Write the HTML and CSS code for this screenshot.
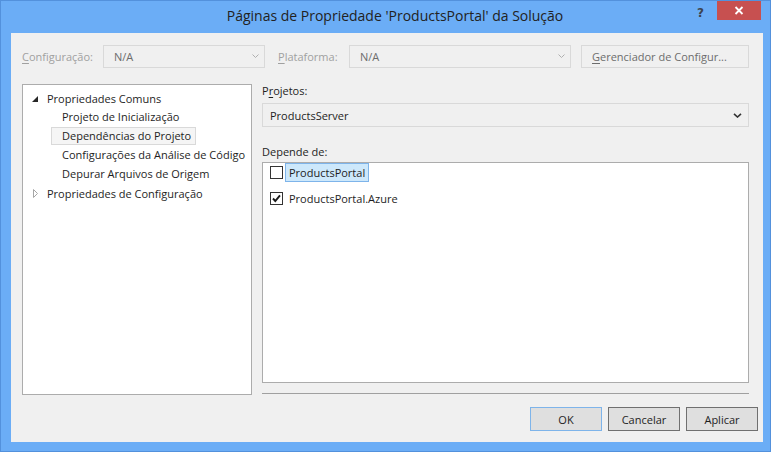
FILE: index.html
```html
<!DOCTYPE html>
<html lang="pt">
<head>
<meta charset="utf-8">
<title>Páginas de Propriedade</title>
<link rel="stylesheet" href="styles.css">
</head>
<body>
<div class="window">
  <div class="titlebar">
    <div class="title">Páginas de Propriedade 'ProductsPortal' da Solução</div>
    <div class="caption-buttons">
      <div class="help">?</div>
      <div class="close">
        <svg width="10" height="9" viewBox="0 0 10 9"><path d="M1.5 1 L8.5 8 M8.5 1 L1.5 8" stroke="#fff" stroke-width="1.8" fill="none"/></svg>
      </div>
    </div>
  </div>
  <div class="client">
    <div class="toolbar">
      <span class="lbl lbl-config"><u>C</u>onfiguração:</span>
      <div class="combo combo-dis combo-w1"><span>N/A</span><svg class="chev" width="7" height="4" viewBox="0 0 7 4"><path d="M0.5 0.5 L3.5 3.5 L6.5 0.5" stroke="#b0b0b0" stroke-width="1" fill="none"/></svg></div>
      <span class="lbl lbl-plat"><u>P</u>lataforma:</span>
      <div class="combo combo-dis combo-w2"><span>N/A</span><svg class="chev" width="7" height="4" viewBox="0 0 7 4"><path d="M0.5 0.5 L3.5 3.5 L6.5 0.5" stroke="#b0b0b0" stroke-width="1" fill="none"/></svg></div>
      <div class="btn-cfg"><u>G</u>erenciador de Configur...</div>
    </div>
    <div class="main">
      <div class="tree">
        <div class="row parent">
          <svg class="exp" width="6" height="6" viewBox="0 0 6 6"><polygon points="6,0 6,6 0,6" fill="#262626"/></svg>
          <span>Propriedades Comuns</span>
        </div>
        <div class="row child"><span class="node">Projeto de Inicialização</span></div>
        <div class="row child"><span class="node selected">Dependências do Projeto</span></div>
        <div class="row child"><span class="node">Configurações da Análise de Código</span></div>
        <div class="row child"><span class="node">Depurar Arquivos de Origem</span></div>
        <div class="row parent">
          <svg class="col" width="5" height="9" viewBox="0 0 5 9"><polygon points="0.5,0.5 4.5,4.5 0.5,8.5" fill="none" stroke="#a6a6a6" stroke-width="1"/></svg>
          <span>Propriedades de Configuração</span>
        </div>
      </div>
      <div class="right">
        <div class="lbl-proj">P<u>r</u>ojetos:</div>
        <div class="combo combo-proj"><span>ProductsServer</span><svg class="chev2" width="9" height="5" viewBox="0 0 9 5"><path d="M1 0.8 L4.5 4 L8 0.8" stroke="#333" stroke-width="1.6" fill="none"/></svg></div>
        <div class="lbl-dep">Depende de:</div>
        <div class="list">
          <div class="item">
            <span class="cb"></span>
            <span class="item-text focus">ProductsPortal</span>
          </div>
          <div class="item">
            <span class="cb"><svg width="11" height="11" viewBox="0 0 11 11"><path d="M2 5.5 L4.3 8 L9 2.3" stroke="#1a1a1a" stroke-width="1.9" fill="none"/></svg></span>
            <span class="item-text">ProductsPortal.Azure</span>
          </div>
        </div>
        <div class="sep"></div>
      </div>
    </div>
    <div class="buttons">
      <div class="btn btn-default">OK</div>
      <div class="btn">Cancelar</div>
      <div class="btn">Aplicar</div>
    </div>
  </div>
</div>
</body>
</html>
```
FILE: styles.css
```css
* { box-sizing: border-box; }
html, body { margin: 0; padding: 0; }
body {
  width: 771px;
  height: 452px;
  overflow: hidden;
  font-family: "Open Sans", "Noto Sans", sans-serif;
  font-size: 11px;
  color: #1e1e1e;
}
u { text-decoration: underline; text-underline-offset: 2px; }

.window {
  width: 771px;
  height: 452px;
  background: #6badf6;
  border: 1px solid #5391dc;
  display: flex;
  flex-direction: column;
}

.titlebar {
  height: 32px;
  display: flex;
  align-items: flex-start;
}
.title {
  flex: 1;
  min-width: 0;
  margin-left: 93px;
  text-align: center;
  font-size: 14px;
  line-height: 30px;
  color: #222;
  white-space: nowrap;
}
.caption-buttons {
  display: flex;
  align-items: flex-start;
  margin-right: 9px;
}
.help {
  width: 9px;
  margin-top: 5px;
  margin-right: 12px;
  font-family: "DejaVu Sans", sans-serif;
  font-weight: bold;
  font-size: 12px;
  line-height: 14px;
  color: #3d4450;
  text-align: center;
}
.close {
  width: 44px;
  height: 19px;
  background: #c75050;
  display: flex;
  align-items: center;
  justify-content: center;
}

.client {
  flex: 1;
  margin: 0 7px 9px 10px;
  background: #f0f0f0;
  padding: 12px 5px 0 11px;
  display: flex;
  flex-direction: column;
}

.toolbar {
  display: flex;
  align-items: center;
  height: 23px;
}
.lbl { color: #a0a0a0; white-space: nowrap; }
.lbl-config { width: 81px; }
.lbl-plat { width: 71px; margin-left: 13px; }
.combo {
  display: flex;
  align-items: center;
  justify-content: space-between;
  border: 1px solid #d9d9d9;
  background: #f0f0f0;
}
.combo-dis {
  height: 23px;
  color: #6d6d6d;
  padding: 0 5px 0 10px;
}
.combo-w1 { width: 162px; }
.combo-w2 { width: 222px; }
.chev { margin-bottom: 1px; }
.btn-cfg {
  width: 168px;
  height: 23px;
  margin-left: 10px;
  border: 1px solid #d9d9d9;
  background: #f0f0f0;
  color: #6d6d6d;
  padding-left: 10px;
  display: flex;
  align-items: center;
  white-space: nowrap;
}

.main {
  display: flex;
  margin-top: 16px;
}
.tree {
  width: 230px;
  height: 311px;
  background: #fff;
  border: 1px solid #acacac;
  padding-top: 4px;
}
.row {
  height: 19px;
  display: flex;
  align-items: center;
  white-space: nowrap;
}
.parent .exp { margin-left: 9px; margin-right: 9px; }
.parent .col { margin-left: 10px; margin-right: 9px; }
.child { align-items: flex-start; }
.node {
  margin-left: 28px;
  height: 18px;
  line-height: 16px;
  padding: 0 4px 0 10px;
  border: 1px solid transparent;
}
.node.selected {
  background: #f5f5f5;
  border-color: #d9d9d9;
}

.right {
  width: 487px;
  margin-left: 10px;
  display: flex;
  flex-direction: column;
}
.lbl-proj {
  height: 19px;
  line-height: 14px;
}
.combo-proj {
  height: 24px;
  padding: 0 6px 0 7px;
  color: #1e1e1e;
}
.lbl-dep {
  height: 35px;
  padding-top: 17px;
  line-height: 16px;
}
.list {
  height: 221px;
  background: #fff;
  border: 1px solid #acacac;
  display: flex;
  flex-direction: column;
  gap: 7px;
}
.item {
  height: 19px;
  display: flex;
  align-items: center;
  padding-left: 7px;
}
.cb {
  width: 13px;
  height: 13px;
  border: 1px solid #333;
  background: #fff;
  display: flex;
  align-items: center;
  justify-content: center;
  margin-right: 2px;
}
.item-text {
  height: 19px;
  line-height: 17px;
  padding: 0 3px;
  border: 1px solid transparent;
  white-space: nowrap;
}
.item-text.focus {
  background: #cde8fb;
  border-color: #7eb4ea;
}
.sep {
  height: 1px;
  margin-top: 10px;
  background: #a0a0a0;
}

.buttons {
  display: flex;
  justify-content: flex-end;
  gap: 6px;
  margin-top: 12px;
}
.btn {
  width: 72px;
  height: 24px;
  border: 1px solid #707070;
  background: #dfdfdf;
  display: flex;
  align-items: center;
  justify-content: center;
}
.btn-default { border-color: #7eb4ea; }
```
